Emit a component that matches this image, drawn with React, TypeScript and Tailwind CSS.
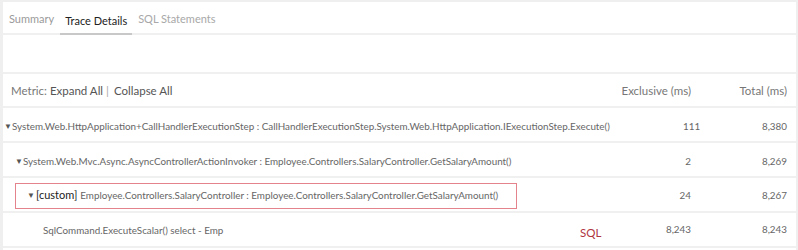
import React from "react";

const ROWS = [
  {
    indent: "pl-[1px]",
    name: "System.Web.HttpApplication+CallHandlerExecutionStep : CallHandlerExecutionStep.System.Web.HttpApplication.IExecutionStep.Execute()",
    excl: "111",
    total: "8,380",
  },
  {
    indent: "pl-[12px]",
    name: "System.Web.Mvc.Async.AsyncControllerActionInvoker : Employee.Controllers.SalaryController.GetSalaryAmount()",
    excl: "2",
    total: "8,269",
  },
];

const Tri = () => <span className="text-[8px] text-[#555] relative -top-[1px]">▼</span>;

export default function App() {
  return (
    <div className="w-[798px] h-[250px] bg-[#efefef] pt-[2px] pl-[3px] pr-[2px] overflow-hidden font-['Lato','Liberation_Sans',sans-serif]">
      <div className="bg-white h-full">
        {/* tabs */}
        <div className="flex h-[33px] items-end gap-[6px] pl-[6px] border-b-2 border-[#f0f0f0] text-[11px]">
          <div className="pb-[6px] text-[#9a9a9a]">Summary</div>
          <div className="pb-[4px] px-[5px] text-[#222] border-b-2 border-[#c8c8c8] -mb-[2px]">Trace Details</div>
          <div className="pb-[6px] text-[#a8a8a8]">SQL Statements</div>
        </div>
        <div className="h-[39px] border-b-2 border-[#f0f0f0]" />

        {/* header */}
        <div className="flex items-center h-[34px] border-b-2 border-[#f0f0f0] pt-[2px] text-[11.5px] text-[#777]">
          <div className="flex-1 pl-[8px]">
            Metric: <span className="text-[#555]">Expand All</span>
            <span className="text-[#aaa] ml-[3px] mr-[5px]">|</span>
            <span className="text-[#555]">Collapse All</span>
          </div>
          <div className="w-[100px] text-right">Exclusive (ms)</div>
          <div className="w-[105px] text-right pr-[9px]">Total (ms)</div>
        </div>

        {/* rows */}
        <div className="text-[9.85px] text-[#666]">
          {ROWS.map((r) => (
            <div key={r.name} className="flex items-center h-[35px] border-b-2 border-[#f0f0f0] pt-[3px]">
              <div className={"flex-1 whitespace-nowrap " + r.indent}>
                <Tri />
                {r.name}
              </div>
              <div className="w-[100px] text-right">{r.excl}</div>
              <div className="w-[105px] text-right pr-[9px]">{r.total}</div>
            </div>
          ))}

          <div className="flex items-center h-[35px] border-b-2 border-[#f0f0f0] pt-[2px]">
            <div className="flex-1 pl-[12px]">
              <div className="w-[502px] h-[26px] border border-[#e4838c] flex items-center pl-[11px] whitespace-nowrap">
                <Tri />
                <span className="text-[#222] text-[11px] ml-[1px] mr-[3px]">[custom]</span>
                Employee.Controllers.SalaryController : Employee.Controllers.SalaryController.GetSalaryAmount()
              </div>
            </div>
            <div className="w-[100px] text-right">24</div>
            <div className="w-[105px] text-right pr-[9px]">8,267</div>
          </div>

          <div className="flex items-center h-[35px] border-b-2 border-[#f0f0f0] pt-[2px]">
            <div className="flex-1 pl-[40px] whitespace-nowrap">SqlCommand.ExecuteScalar() select - Emp</div>
            <div className="w-[83px] text-[11.5px] text-[#b0353f] pt-[4px]">SQL</div>
            <div className="w-[28px] text-right -mt-[3px]">8,243</div>
            <div className="w-[105px] text-right pr-[9px] -mt-[3px]">8,243</div>
          </div>
        </div>
      </div>
    </div>
  );
}
